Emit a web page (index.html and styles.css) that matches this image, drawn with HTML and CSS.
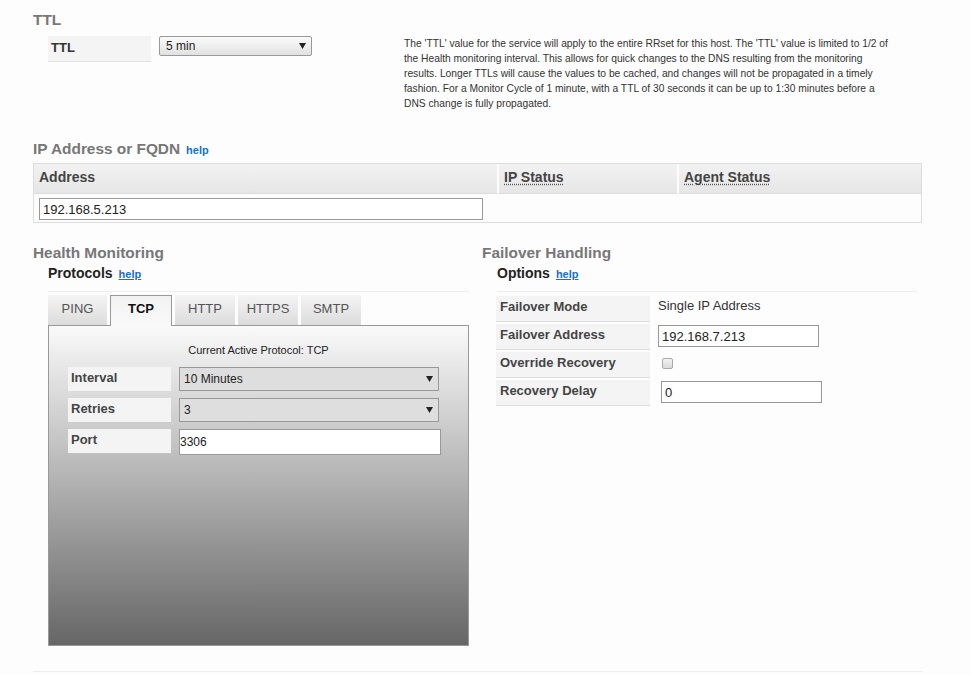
FILE: index.html
```html
<!DOCTYPE html>
<html>
<head>
<meta charset="utf-8">
<title>Service</title>
<link rel="stylesheet" href="styles.css">
</head>
<body>
<div class="page">
  <section class="sec-ttl">
    <h2 class="sec-title">TTL</h2>
    <div class="ttl-body">
      <div class="ttl-row">
        <div class="ttl-label">TTL</div>
        <div class="fake-select ttl-select"><span>5 min</span><svg class="arrow" width="7" height="6" viewBox="0 0 7 6"><polygon points="0,0 7,0 3.5,6"/></svg></div>
      </div>
      <p class="ttl-help">The 'TTL' value for the service will apply to the entire RRset for this host. The 'TTL' value is limited to 1/2 of the Health monitoring interval. This allows for quick changes to the DNS resulting from the monitoring results. Longer TTLs will cause the values to be cached, and changes will not be propagated in a timely fashion. For a Monitor Cycle of 1 minute, with a TTL of 30 seconds it can be up to 1:30 minutes before a DNS change is fully propagated.</p>
    </div>
  </section>

  <section class="sec-ip">
    <h2 class="sec-title">IP Address or FQDN<a class="help">help</a></h2>
    <table class="ip-table">
      <thead>
        <tr>
          <th class="col-addr">Address</th>
          <th class="col-ip"><span class="abbr">IP Status</span></th>
          <th class="col-agent"><span class="abbr">Agent Status</span></th>
        </tr>
      </thead>
      <tbody>
        <tr>
          <td><input class="text-input addr-input" type="text" value="192.168.5.213"></td>
          <td></td>
          <td></td>
        </tr>
      </tbody>
    </table>
  </section>

  <div class="columns">
    <section class="col">
      <h2 class="sec-title">Health Monitoring</h2>
      <div class="sub sub-left">
        <h3 class="sub-title">Protocols<a class="help help-u">help</a></h3>
        <div class="sub-body sub-body-tabs">
          <div class="tabs">
            <div class="tab tab-first">PING</div>
            <div class="tab tab-active">TCP</div>
            <div class="tab">HTTP</div>
            <div class="tab">HTTPS</div>
            <div class="tab">SMTP</div>
          </div>
          <div class="panel">
            <p class="panel-caption">Current Active Protocol: TCP</p>
            <div class="pform">
              <div class="plabel">Interval</div>
              <div class="fake-select pselect"><span>10 Minutes</span><svg class="arrow" width="7" height="6" viewBox="0 0 7 6"><polygon points="0,0 7,0 3.5,6"/></svg></div>
              <div class="plabel">Retries</div>
              <div class="fake-select pselect"><span>3</span><svg class="arrow" width="7" height="6" viewBox="0 0 7 6"><polygon points="0,0 7,0 3.5,6"/></svg></div>
              <div class="plabel">Port</div>
              <input class="text-input port-input" type="text" value="3306">
            </div>
          </div>
        </div>
      </div>
    </section>

    <section class="col">
      <h2 class="sec-title">Failover Handling</h2>
      <div class="sub sub-right">
        <h3 class="sub-title">Options<a class="help help-u">help</a></h3>
        <div class="sub-body sub-body-opts">
          <table class="opt-table">
            <tr>
              <th>Failover Mode</th>
              <td><span class="opt-text">Single IP Address</span></td>
            </tr>
            <tr>
              <th>Failover Address</th>
              <td><input class="text-input opt-input" type="text" value="192.168.7.213"></td>
            </tr>
            <tr>
              <th>Override Recovery</th>
              <td><input class="checkbox" type="checkbox"></td>
            </tr>
            <tr>
              <th>Recovery Delay</th>
              <td><input class="text-input opt-input opt-input-shift" type="text" value="0"></td>
            </tr>
          </table>
        </div>
      </div>
    </section>
  </div>

  <div class="footer-line"></div>
</div>
</body>
</html>
```

FILE: styles.css
```css
* { box-sizing: border-box; }

html, body {
  margin: 0;
  padding: 0;
  background: #fdfdfd;
}

body {
  font-family: "Liberation Sans", Arial, sans-serif;
  color: #333;
  font-size: 13px;
}

.page {
  width: 889px;
  margin-left: 33px;
  padding-top: 11px;
}

.sec-title {
  margin: 0;
  font-size: 15.4px;
  line-height: 18px;
  font-weight: bold;
  color: #777;
}

.help {
  font-size: 11px;
  line-height: 1;
  font-weight: bold;
  color: #1670c8;
  margin-left: 6px;
  text-decoration: none;
}

.help-u { text-decoration: underline; }

/* TTL */
.ttl-body {
  display: grid;
  grid-template-columns: 356px 491px;
  margin-top: 7px;
  padding-left: 15px;
}

.ttl-row {
  display: flex;
  align-items: flex-start;
  gap: 8px;
}

.ttl-label {
  width: 103px;
  height: 26px;
  background: #f4f4f4;
  border-bottom: 1px solid #e2e2e2;
  padding: 4px 0 0 3px;
  font-size: 13px;
  line-height: 15px;
  font-weight: bold;
  color: #333;
}

.fake-select {
  display: flex;
  align-items: center;
  justify-content: space-between;
  border: 1px solid #999;
  font-size: 12px;
  color: #222;
}

.arrow { fill: #222; display: block; }

.ttl-select {
  width: 153px;
  height: 20px;
  border-radius: 2px;
  background: linear-gradient(#fbfbfb, #e1e1e1);
  padding: 0 5px 0 6px;
}

.ttl-help {
  margin: 0;
  font-size: 10.25px;
  line-height: 15px;
  color: #333;
}

/* IP table */
.sec-ip { margin-top: 29px; }

.ip-table {
  margin-top: 5px;
  width: 889px;
  border: 1px solid #ddd;
  border-collapse: separate;
  border-spacing: 0;
  table-layout: fixed;
}

.ip-table th {
  height: 30px;
  padding: 5px 5px 7px;
  background: linear-gradient(#f2f2f2, #e6e6e6);
  border-bottom: 1px solid #dcdcdc;
  text-align: left;
  vertical-align: top;
  font-size: 14px;
  line-height: 17px;
  font-weight: bold;
  color: #444;
}

.ip-table .col-addr { width: 465px; border-right: 2px solid #fdfdfd; }
.ip-table .col-ip { width: 180px; border-right: 2px solid #fdfdfd; }
.ip-table .col-agent { width: 242px; }

.abbr {
  text-decoration: underline dotted #555;
  text-underline-offset: 2px;
}

.ip-table td {
  height: 28px;
  padding: 4px 5px 2px;
  vertical-align: top;
}

.text-input {
  display: block;
  margin: 0;
  border: 1px solid #999;
  background: #fff;
  font-family: "Liberation Sans", Arial, sans-serif;
  font-size: 13px;
  color: #222;
  outline: none;
}

.addr-input {
  width: 444px;
  height: 22px;
  padding: 0 3px;
}

/* Columns */
.columns {
  display: grid;
  grid-template-columns: 436px 440px;
  column-gap: 13px;
  margin-top: 21px;
  align-items: start;
}

.sub {
  margin-left: 15px;
  margin-top: 3px;
}

.sub-left { width: 421px; }
.sub-right { width: 420px; }

.sub-title {
  margin: 0;
  font-size: 14px;
  line-height: 17px;
  font-weight: bold;
  color: #222;
}

.sub-body {
  margin-top: 9px;
  border-top: 1px solid #eee;
}

.sub-body-tabs { padding-top: 3px; }
.sub-body-opts { padding-top: 2px; }

/* Tabs */
.tabs {
  display: flex;
  align-items: flex-start;
  gap: 3px;
  height: 30px;
}

.tab {
  width: 60px;
  height: 30px;
  background: linear-gradient(#f4f4f4, #dcdcdc);
  text-align: center;
  font-size: 13px;
  line-height: 27px;
  color: #555;
}

.tab-first { width: 59px; }

.tab-active {
  position: relative;
  z-index: 1;
  width: 62px;
  height: 31px;
  border: 1px solid #999;
  border-bottom: none;
  background: linear-gradient(#f2f2f2, #f9f9f9);
  line-height: 26px;
  font-weight: bold;
  color: #111;
}

.panel {
  height: 321px;
  border: 1px solid #999;
  background: linear-gradient(#fafafa, #666);
  padding-top: 18px;
}

.panel-caption {
  margin: 0;
  text-align: center;
  font-size: 11px;
  line-height: 13px;
  color: #222;
}

.pform {
  display: grid;
  grid-template-columns: 103px 262px;
  column-gap: 8px;
  row-gap: 7px;
  align-items: start;
  margin: 10px 0 0 19px;
}

.plabel {
  height: 24px;
  background: #f4f4f4;
  padding: 3px 0 0 3px;
  font-size: 13px;
  line-height: 15px;
  font-weight: bold;
  color: #444;
}

.pselect {
  width: 260px;
  height: 24px;
  background: #dedede;
  padding: 0 5px 0 4px;
}

.port-input {
  width: 262px;
  height: 26px;
  padding: 0;
  font-size: 12px;
}

/* Options table */
.opt-table {
  border-collapse: separate;
  border-spacing: 2px;
  margin-left: -3px;
}

.opt-table th {
  width: 154px;
  height: 26px;
  padding: 3px 0 0 4px;
  background: #f4f4f4;
  border-bottom: 1px solid #dedede;
  text-align: left;
  vertical-align: top;
  font-size: 13px;
  line-height: 15px;
  font-weight: bold;
  color: #444;
}

.opt-table td {
  padding: 0 0 0 6px;
  vertical-align: top;
}

.opt-text {
  display: block;
  padding-top: 2px;
  font-size: 13px;
  line-height: 15px;
  color: #333;
}

.opt-input {
  width: 161px;
  height: 22px;
  margin-top: 1px;
  padding: 0 3px;
}

.opt-input-shift { margin-left: 3px; }

.checkbox {
  -webkit-appearance: none;
  appearance: none;
  display: block;
  width: 11px;
  height: 11px;
  margin: 6px 0 0 4px;
  border: 1px solid #a9a9a9;
  border-radius: 2px;
  background: linear-gradient(#f3f3f3, #dadada);
}

.footer-line {
  margin-top: 25px;
  border-top: 1px solid #eee;
}
```
